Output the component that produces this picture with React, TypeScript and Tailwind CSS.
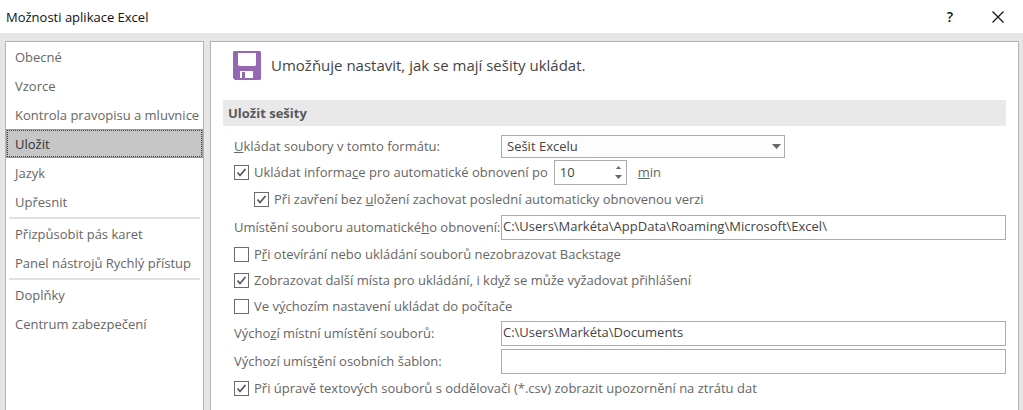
import React, { useState } from "react";

interface CheckRowProps {
  id: string;
  checked: boolean;
  onToggle: (id: string) => void;
  children: React.ReactNode;
}

const NAV_GROUPS = [
  ["Obecné", "Vzorce", "Kontrola pravopisu a mluvnice", "Uložit", "Jazyk", "Upřesnit"],
  ["Přizpůsobit pás karet", "Panel nástrojů Rychlý přístup"],
  ["Doplňky", "Centrum zabezpečení"],
];

const INPUT_CLASS =
  "h-[25px] min-w-0 flex-1 border border-[#ababab] bg-white px-px pb-0.5 text-[13px] text-[#444] outline-none";

const SaveIcon = () => (
  <svg width="28" height="29" viewBox="0 0 28 29" aria-hidden="true">
    <path
      fill="#9668b4"
      fillRule="evenodd"
      d="M1 0H27L28 1V28L27 29H2L0 27V1ZM5 2V14L6 15H22L23 14V2ZM7 20V27H20V20Z"
    />
    <path fill="#9668b4" d="M9 21h3v6H9z" />
  </svg>
);

const CheckRow: React.FC<CheckRowProps> = ({ id, checked, onToggle, children }) => (
  <div className="flex items-center gap-[5px]">
    <span className="grid size-[15px] shrink-0 place-items-center">
      <input
        id={id}
        type="checkbox"
        checked={checked}
        onChange={() => onToggle(id)}
        className="peer col-start-1 row-start-1 size-[15px] appearance-none border border-[#6a6a6a] bg-white"
      />
      <svg
        width="11"
        height="11"
        viewBox="0 0 11 11"
        className="pointer-events-none col-start-1 row-start-1 hidden peer-checked:block"
        aria-hidden="true"
      >
        <path d="M1.5 5.5 4 8.5 9.5 2" fill="none" stroke="#555" strokeWidth="1.7" />
      </svg>
    </span>
    <label htmlFor={id} className="whitespace-nowrap">
      {children}
    </label>
  </div>
);

const App: React.FC = () => {
  const [section, setSection] = useState("Uložit");
  const [minutes, setMinutes] = useState(10);
  const [options, setOptions] = useState<Record<string, boolean>>({
    autoRecover: true,
    keepLast: true,
    skipBackstage: false,
    showPlaces: true,
    saveLocal: false,
    csvWarning: true,
  });

  const toggle = (id: string) => {
    setOptions((prev) => ({ ...prev, [id]: !prev[id] }));
  };

  return (
    <div className="flex min-h-screen flex-col bg-[#e5e5e5] font-['Open_Sans','Noto_Sans',sans-serif] text-[13px] leading-5 text-[#666]">
      {/* Title bar */}
      <header className="flex h-[33px] items-center justify-between bg-white pr-[19px] pl-1.5 text-[#111]">
        <h1>Možnosti aplikace Excel</h1>
        <div className="flex items-center gap-9">
          <button type="button" aria-label="Nápověda" className="w-3 text-sm font-semibold">
            ?
          </button>
          <button type="button" aria-label="Zavřít" className="flex w-3 items-center justify-center">
            <svg width="12" height="12" viewBox="0 0 12 12" aria-hidden="true">
              <path d="M.5.5 11.5 11.5M11.5.5.5 11.5" stroke="#111" strokeWidth="1.2" />
            </svg>
          </button>
        </div>
      </header>

      <div className="flex flex-1 gap-1.5 pt-2 pr-1 pl-[5px]">
        {/* Sections */}
        <nav className="w-[199px] shrink-0 border border-b-0 border-[#b4b4b4] bg-white">
          {NAV_GROUPS.map((group, i) => (
            <React.Fragment key={group[0]}>
              {i > 0 && <hr className="mx-[3px] mt-px h-0.5 border-0 bg-[#e1e1e1]" />}
              {group.map((item) => (
                <button
                  key={item}
                  type="button"
                  onClick={() => setSection(item)}
                  className={`
                    block h-[29px] w-full text-left whitespace-nowrap
                    ${item === section
                      ? "border border-[#999] bg-[#c6c6c6] text-[#333]"
                      : "px-[9px]"
                    }
                  `}
                >
                  {item === section ? (
                    <span className="flex h-full items-center border border-dotted border-[#444] px-[7px]">
                      {item}
                    </span>
                  ) : (
                    item
                  )}
                </button>
              ))}
            </React.Fragment>
          ))}
        </nav>

        {/* Save options */}
        <main className="min-w-0 flex-1 border border-b-0 border-[#b4b4b4] bg-white px-3">
          <div className="flex h-[58px] items-center gap-2.5 px-2.5 pb-3 text-[15px] text-[#444]">
            <SaveIcon />
            <p>Umožňuje nastavit, jak se mají sešity ukládat.</p>
          </div>

          <h2 className="flex h-[26px] items-center bg-[#e9e9e9] px-[5px] font-bold text-[#595959]">
            Uložit sešity
          </h2>

          <form className="mt-[7px] pl-[11px]" onSubmit={(e) => e.preventDefault()}>
            <div className="flex h-[26px] items-center">
              <label htmlFor="format" className="w-[267px] shrink-0">
                <u>U</u>kládat soubory v tomto formátu:
              </label>
              <div className="grid w-[284px] items-center">
                <select
                  id="format"
                  className="col-start-1 row-start-1 h-[23px] w-full appearance-none border border-[#ababab] bg-[#fdfdfd] px-[5px] text-[#444] outline-none"
                >
                  <option>Sešit Excelu</option>
                </select>
                <svg
                  width="9"
                  height="5"
                  viewBox="0 0 9 5"
                  className="pointer-events-none col-start-1 row-start-1 mr-1 justify-self-end"
                  aria-hidden="true"
                >
                  <path d="M0 0H9L4.500 5Z" fill="#666" />
                </svg>
              </div>
            </div>

            <div className="flex h-[26px] items-center">
              <CheckRow id="autoRecover" checked={options.autoRecover} onToggle={toggle}>
                Ukládat informa<u>c</u>e pro automatické obnovení po
              </CheckRow>
              <div className="ml-1.5 flex h-[25px] w-[73px] items-center border border-[#ababab] bg-white pr-1 pl-[5px]">
                <input
                  id="minutes"
                  type="text"
                  inputMode="numeric"
                  value={minutes}
                  onChange={(e) => setMinutes(Number(e.target.value) || 0)}
                  className="w-full min-w-0 text-[#444] outline-none"
                />
                <div className="flex flex-col gap-1.5">
                  <button type="button" aria-label="Zvýšit" onClick={() => setMinutes(minutes + 1)}>
                    <svg width="7" height="4" viewBox="0 0 7 4" className="block" aria-hidden="true">
                      <path d="M1 4H6L3.500 1Z" fill="#666" />
                    </svg>
                  </button>
                  <button
                    type="button"
                    aria-label="Snížit"
                    onClick={() => setMinutes(Math.max(1, minutes - 1))}
                  >
                    <svg width="7" height="4" viewBox="0 0 7 4" className="block" aria-hidden="true">
                      <path d="M0 0H7L3.500 4Z" fill="#666" />
                    </svg>
                  </button>
                </div>
              </div>
              <label htmlFor="minutes" className="ml-[11px]">
                <u>m</u>in
              </label>
            </div>

            <div className="flex h-7 items-center pl-5">
              <CheckRow id="keepLast" checked={options.keepLast} onToggle={toggle}>
                Při zavření bez <u>u</u>ložení zachovat poslední automaticky obnovenou verzi
              </CheckRow>
            </div>

            <div className="flex h-7 items-center">
              <label htmlFor="recoverPath" className="w-[267px] shrink-0 whitespace-nowrap">
                Umístění souboru automatické<u>h</u>o obnovení:
              </label>
              <input
                id="recoverPath"
                type="text"
                defaultValue={"C:\\Users\\Markéta\\AppData\\Roaming\\Microsoft\\Excel\\"}
                className={INPUT_CLASS}
              />
            </div>

            <div className="flex h-[26px] items-center">
              <CheckRow id="skipBackstage" checked={options.skipBackstage} onToggle={toggle}>
                P<u>ř</u>i otevírání nebo ukládání souborů nezobrazovat Backstage
              </CheckRow>
            </div>
            <div className="flex h-[26px] items-center">
              <CheckRow id="showPlaces" checked={options.showPlaces} onToggle={toggle}>
                Zobrazovat další místa pro ukládání, i kd<u>y</u>ž se může vyžadovat přihlášení
              </CheckRow>
            </div>
            <div className="flex h-[26px] items-center">
              <CheckRow id="saveLocal" checked={options.saveLocal} onToggle={toggle}>
                Ve v<u>ý</u>chozím nastavení ukládat do počítače
              </CheckRow>
            </div>

            <div className="flex h-7 items-center">
              <label htmlFor="localPath" className="w-[267px] shrink-0">
                Výcho<u>z</u>í místní umístění souborů:
              </label>
              <input
                id="localPath"
                type="text"
                defaultValue={"C:\\Users\\Markéta\\Documents"}
                className={INPUT_CLASS}
              />
            </div>
            <div className="flex h-7 items-center">
              <label htmlFor="templatePath" className="w-[267px] shrink-0">
                Výchozí umís<u>t</u>ění osobních šablon:
              </label>
              <input id="templatePath" type="text" className={INPUT_CLASS} />
            </div>

            <div className="flex h-[26px] items-center">
              <CheckRow id="csvWarning" checked={options.csvWarning} onToggle={toggle}>
                Při úpravě textových souborů s oddělovači (*.csv) zobrazit upozornění na ztrátu dat
              </CheckRow>
            </div>
          </form>
        </main>
      </div>
    </div>
  );
};

export default App;
